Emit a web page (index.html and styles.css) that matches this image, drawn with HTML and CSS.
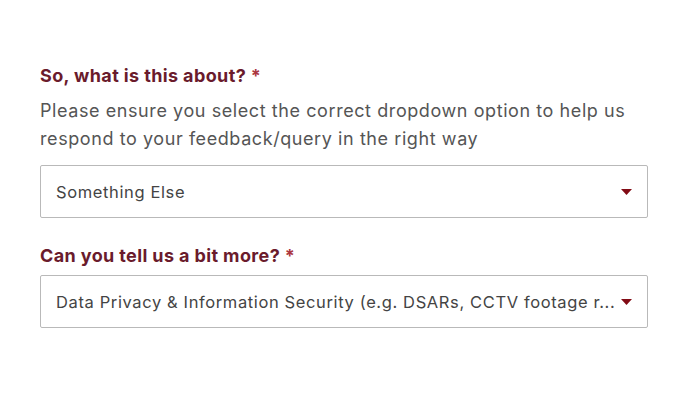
FILE: index.html
```html
<!DOCTYPE html>
<html>
<head>
<meta charset="utf-8">
<link rel="stylesheet" href="styles.css">
</head>
<body>
<form class="form">
  <div class="field">
    <div class="label">So, what is this about? <span class="req">*</span></div>
    <p class="help">Please ensure you select the correct dropdown option to help us respond to your feedback/query in the right way</p>
    <div class="select">
      <span class="value">Something Else</span>
      <svg class="arrow" width="11" height="6" viewBox="0 0 11 6"><path d="M0 0H11L5.5 6Z" fill="#820b15"/></svg>
    </div>
  </div>
  <div class="field field2">
    <div class="label">Can you tell us a bit more? <span class="req">*</span></div>
    <div class="select">
      <span class="value">Data Privacy &amp; Information Security (e.g. DSARs, CCTV footage r...</span>
      <svg class="arrow" width="11" height="6" viewBox="0 0 11 6"><path d="M0 0H11L5.5 6Z" fill="#820b15"/></svg>
    </div>
  </div>
</form>
</body>
</html>
```
FILE: styles.css
```css
html, body {
  margin: 0;
  background: #fff;
}
body {
  font-family: "Inter", "Open Sans", sans-serif;
}
.form {
  padding: 63px 36px 0 40px;
  width: 608px;
}
.label {
  font-size: 18px;
  font-weight: 700;
  color: #6a1b2c;
  line-height: 26px;
  letter-spacing: 0.38px;
}
.req {
  color: #ab3640;
}
.help {
  margin: 8px 0 0;
  font-size: 18px;
  line-height: 28px;
  color: #555;
  letter-spacing: 0.58px;
}
.select {
  margin-top: 12px;
  height: 53px;
  box-sizing: border-box;
  border: 1px solid #b9b9b9;
  border-radius: 2px;
  display: flex;
  align-items: center;
  padding: 0 15px 0 15px;
  gap: 10px;
}
.value {
  flex: 1;
  min-width: 0;
  font-size: 16.5px;
  color: #444;
  white-space: nowrap;
  letter-spacing: 0.62px;
}
.arrow {
  flex: none;
}
.field2 {
  margin-top: 25px;
}
.field2 .select {
  margin-top: 6px;
}
```
